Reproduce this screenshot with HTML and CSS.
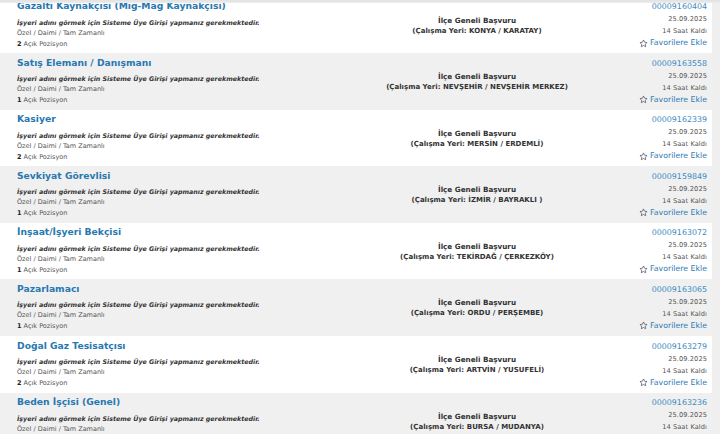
FILE: index.html
```html
<!DOCTYPE html>
<html lang="tr">
<head>
<meta charset="utf-8">
<link rel="stylesheet" href="styles.css">
</head>
<body>
<div class="topshade"></div>
<div class="list">
  <div class="row first">
    <div class="left">
      <div class="title">Gazaltı Kaynakçısı (Mıg-Mag Kaynakçısı)</div>
      <div class="note">İşyeri adını görmek için Sisteme Üye Girişi yapmanız gerekmektedir.</div>
      <div class="meta">Özel / Daimi / Tam Zamanlı</div>
      <div class="meta"><b>2</b> Açık Pozisyon</div>
    </div>
    <div class="mid">
      <div class="scope">İlçe Geneli Başvuru</div>
      <div class="place">(Çalışma Yeri: KONYA / KARATAY)</div>
    </div>
    <div class="right">
      <div class="num">00009160404</div>
      <div class="small">25.09.2025</div>
      <div class="small">14 Saat Kaldı</div>
      <div class="fav"><svg class="star" viewBox="0 0 24 24"><path d="M12 2.5l2.9 6.1 6.6.8-4.9 4.6 1.3 6.6L12 17.3l-5.9 3.3 1.3-6.6-4.9-4.6 6.6-.8z"/></svg>Favorilere Ekle</div>
    </div>
  </div>
  <div class="row alt">
    <div class="left">
      <div class="title">Satış Elemanı / Danışmanı</div>
      <div class="note">İşyeri adını görmek için Sisteme Üye Girişi yapmanız gerekmektedir.</div>
      <div class="meta">Özel / Daimi / Tam Zamanlı</div>
      <div class="meta"><b>1</b> Açık Pozisyon</div>
    </div>
    <div class="mid">
      <div class="scope">İlçe Geneli Başvuru</div>
      <div class="place">(Çalışma Yeri: NEVŞEHİR / NEVŞEHİR MERKEZ)</div>
    </div>
    <div class="right">
      <div class="num">00009163558</div>
      <div class="small">25.09.2025</div>
      <div class="small">14 Saat Kaldı</div>
      <div class="fav"><svg class="star" viewBox="0 0 24 24"><path d="M12 2.5l2.9 6.1 6.6.8-4.9 4.6 1.3 6.6L12 17.3l-5.9 3.3 1.3-6.6-4.9-4.6 6.6-.8z"/></svg>Favorilere Ekle</div>
    </div>
  </div>
  <div class="row">
    <div class="left">
      <div class="title">Kasiyer</div>
      <div class="note">İşyeri adını görmek için Sisteme Üye Girişi yapmanız gerekmektedir.</div>
      <div class="meta">Özel / Daimi / Tam Zamanlı</div>
      <div class="meta"><b>2</b> Açık Pozisyon</div>
    </div>
    <div class="mid">
      <div class="scope">İlçe Geneli Başvuru</div>
      <div class="place">(Çalışma Yeri: MERSİN / ERDEMLİ)</div>
    </div>
    <div class="right">
      <div class="num">00009162339</div>
      <div class="small">25.09.2025</div>
      <div class="small">14 Saat Kaldı</div>
      <div class="fav"><svg class="star" viewBox="0 0 24 24"><path d="M12 2.5l2.9 6.1 6.6.8-4.9 4.6 1.3 6.6L12 17.3l-5.9 3.3 1.3-6.6-4.9-4.6 6.6-.8z"/></svg>Favorilere Ekle</div>
    </div>
  </div>
  <div class="row alt">
    <div class="left">
      <div class="title">Sevkiyat Görevlisi</div>
      <div class="note">İşyeri adını görmek için Sisteme Üye Girişi yapmanız gerekmektedir.</div>
      <div class="meta">Özel / Daimi / Tam Zamanlı</div>
      <div class="meta"><b>1</b> Açık Pozisyon</div>
    </div>
    <div class="mid">
      <div class="scope">İlçe Geneli Başvuru</div>
      <div class="place">(Çalışma Yeri: İZMİR / BAYRAKLI )</div>
    </div>
    <div class="right">
      <div class="num">00009159849</div>
      <div class="small">25.09.2025</div>
      <div class="small">14 Saat Kaldı</div>
      <div class="fav"><svg class="star" viewBox="0 0 24 24"><path d="M12 2.5l2.9 6.1 6.6.8-4.9 4.6 1.3 6.6L12 17.3l-5.9 3.3 1.3-6.6-4.9-4.6 6.6-.8z"/></svg>Favorilere Ekle</div>
    </div>
  </div>
  <div class="row">
    <div class="left">
      <div class="title">İnşaat/İşyeri Bekçisi</div>
      <div class="note">İşyeri adını görmek için Sisteme Üye Girişi yapmanız gerekmektedir.</div>
      <div class="meta">Özel / Daimi / Tam Zamanlı</div>
      <div class="meta"><b>1</b> Açık Pozisyon</div>
    </div>
    <div class="mid">
      <div class="scope">İlçe Geneli Başvuru</div>
      <div class="place">(Çalışma Yeri: TEKİRDAĞ / ÇERKEZKÖY)</div>
    </div>
    <div class="right">
      <div class="num">00009163072</div>
      <div class="small">25.09.2025</div>
      <div class="small">14 Saat Kaldı</div>
      <div class="fav"><svg class="star" viewBox="0 0 24 24"><path d="M12 2.5l2.9 6.1 6.6.8-4.9 4.6 1.3 6.6L12 17.3l-5.9 3.3 1.3-6.6-4.9-4.6 6.6-.8z"/></svg>Favorilere Ekle</div>
    </div>
  </div>
  <div class="row alt">
    <div class="left">
      <div class="title">Pazarlamacı</div>
      <div class="note">İşyeri adını görmek için Sisteme Üye Girişi yapmanız gerekmektedir.</div>
      <div class="meta">Özel / Daimi / Tam Zamanlı</div>
      <div class="meta"><b>1</b> Açık Pozisyon</div>
    </div>
    <div class="mid">
      <div class="scope">İlçe Geneli Başvuru</div>
      <div class="place">(Çalışma Yeri: ORDU / PERŞEMBE)</div>
    </div>
    <div class="right">
      <div class="num">00009163065</div>
      <div class="small">25.09.2025</div>
      <div class="small">14 Saat Kaldı</div>
      <div class="fav"><svg class="star" viewBox="0 0 24 24"><path d="M12 2.5l2.9 6.1 6.6.8-4.9 4.6 1.3 6.6L12 17.3l-5.9 3.3 1.3-6.6-4.9-4.6 6.6-.8z"/></svg>Favorilere Ekle</div>
    </div>
  </div>
  <div class="row">
    <div class="left">
      <div class="title">Doğal Gaz Tesisatçısı</div>
      <div class="note">İşyeri adını görmek için Sisteme Üye Girişi yapmanız gerekmektedir.</div>
      <div class="meta">Özel / Daimi / Tam Zamanlı</div>
      <div class="meta"><b>2</b> Açık Pozisyon</div>
    </div>
    <div class="mid">
      <div class="scope">İlçe Geneli Başvuru</div>
      <div class="place">(Çalışma Yeri: ARTVİN / YUSUFELİ)</div>
    </div>
    <div class="right">
      <div class="num">00009163279</div>
      <div class="small">25.09.2025</div>
      <div class="small">14 Saat Kaldı</div>
      <div class="fav"><svg class="star" viewBox="0 0 24 24"><path d="M12 2.5l2.9 6.1 6.6.8-4.9 4.6 1.3 6.6L12 17.3l-5.9 3.3 1.3-6.6-4.9-4.6 6.6-.8z"/></svg>Favorilere Ekle</div>
    </div>
  </div>
  <div class="row alt">
    <div class="left">
      <div class="title">Beden İşçisi (Genel)</div>
      <div class="note">İşyeri adını görmek için Sisteme Üye Girişi yapmanız gerekmektedir.</div>
      <div class="meta">Özel / Daimi / Tam Zamanlı</div>
      <div class="meta"><b>1</b> Açık Pozisyon</div>
    </div>
    <div class="mid">
      <div class="scope">İlçe Geneli Başvuru</div>
      <div class="place">(Çalışma Yeri: BURSA / MUDANYA)</div>
    </div>
    <div class="right">
      <div class="num">00009163236</div>
      <div class="small">25.09.2025</div>
      <div class="small">14 Saat Kaldı</div>
      <div class="fav"><svg class="star" viewBox="0 0 24 24"><path d="M12 2.5l2.9 6.1 6.6.8-4.9 4.6 1.3 6.6L12 17.3l-5.9 3.3 1.3-6.6-4.9-4.6 6.6-.8z"/></svg>Favorilere Ekle</div>
    </div>
  </div>
</div>
</body>
</html>
```

FILE: styles.css
```css
html, body {
  margin: 0;
  padding: 0;
}
body {
  background: #efefef;
  font-family: "DejaVu Sans", Verdana, sans-serif;
  color: #444;
  overflow: hidden;
}
.topshade {
  position: fixed;
  top: 0;
  left: 0;
  right: 0;
  height: 3px;
  background: linear-gradient(#e2e2e2, #ececec);
  z-index: 2;
}
.list {
  width: 712px;
}
.row {
  display: grid;
  grid-template-columns: 330px 1fr 100px;
  height: 56.6px;
  box-sizing: border-box;
  padding: 2.5px 5px 0 17px;
  background: #fff;
}
.row.first {
  margin-top: -3.5px;
}
.row.alt {
  background: #f0f0f0;
}
.left, .right, .mid {
  min-width: 0;
  white-space: nowrap;
}
.title {
  font-size: 9.2px;
  font-weight: bold;
  color: #2878b0;
  line-height: 14px;
  margin-bottom: 3.5px;
}
.note {
  font-size: 6.3px;
  font-weight: bold;
  font-style: italic;
  color: #333;
  line-height: 11px;
}
.meta {
  font-size: 6.5px;
  color: #555;
  line-height: 11px;
}
.meta b {
  color: #222;
}
.mid {
  text-align: center;
  padding-top: 15.5px;
}
.scope, .place {
  font-size: 7px;
  font-weight: bold;
  color: #333;
  line-height: 11px;
}
.scope {
  font-size: 7.2px;
}
.right {
  text-align: right;
  padding-top: 1px;
}
.num {
  font-size: 7.9px;
  color: #3a8ac0;
  line-height: 13px;
}
.small {
  font-size: 6.6px;
  color: #555;
  line-height: 12px;
  letter-spacing: 0.1px;
}
.fav {
  font-size: 7.8px;
  color: #2e7bb5;
  line-height: 12px;
  display: flex;
  justify-content: flex-end;
  align-items: center;
  gap: 2px;
}
.star {
  width: 9px;
  height: 9px;
  fill: none;
  stroke: #556;
  stroke-width: 2;
  stroke-linejoin: round;
}
```
